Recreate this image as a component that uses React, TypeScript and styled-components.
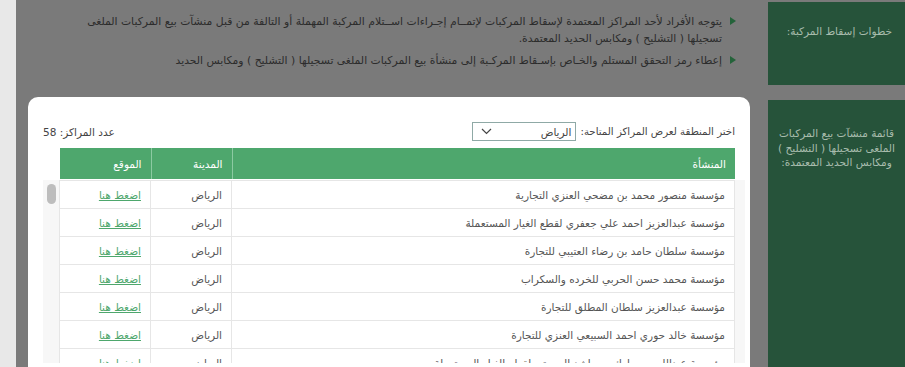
import styled, { createGlobalStyle } from "styled-components";

const GlobalStyle = createGlobalStyle`
  html, body {
    margin: 0;
    padding: 0;
    overflow: hidden;
    background: #7a7a7a;
  }
  * {
    box-sizing: border-box;
  }
`;

const names = [
  "مؤسسة منصور محمد بن مضحي العنزي التجارية",
  "مؤسسة عبدالعزيز احمد علي جعفري لقطع الغيار المستعملة",
  "مؤسسة سلطان حامد بن رضاء العتيبي للتجارة",
  "مؤسسة محمد حسن الحربي للخرده والسكراب",
  "مؤسسة عبدالعزيز سلطان المطلق للتجارة",
  "مؤسسة خالد حوري احمد السبيعي العنزي للتجارة",
  "مؤسسة عبدالله بن مبارك بن راشد الصويتي لقطع الغيار المستعملة",
];

// 58 rows like the real list, only the first few are visible
const centers = Array.from({ length: 58 }, (_, i) => names[i % names.length]);

const ROW_H = 28;
const VIEW_H = 183;
const thumbH = Math.max(20, Math.round((VIEW_H * VIEW_H) / (centers.length * ROW_H)) - 2);

export default function App() {
  return (
    <>
      <GlobalStyle />
      <Page>
        <LeftStrip />
        <Main>
          <Steps>
            <Step>
              <Bullet />
              <StepText>
                يتوجه الأفراد لأحد المراكز المعتمدة لإسقاط المركبات لإتمــام إجـراءات اســتلام المركبة المهملة أو التالفة من قبل منشآت بيع المركبات الملغى
                <br />
                تسجيلها ( التشليح ) ومكابس الحديد المعتمدة.
              </StepText>
            </Step>
            <Step>
              <Bullet />
              <StepText>
                إعطاء رمز التحقق المستلم والخـاص بإسـقاط المركـبة إلى منشأة بيع المركبات الملغى تسجيلها ( التشليح ) ومكابس الحديد
              </StepText>
            </Step>
          </Steps>
          <Card>
            <FilterRow>
              <FilterLabel>
                اختر المنطقة لعرض المراكز المتاحة:
                <Select>
                  <span>الرياض</span>
                  <svg width="11" height="7" viewBox="0 0 11 7">
                    <path d="M1 1l4.5 4.5L10 1" fill="none" stroke="#444" strokeWidth="1.2" />
                  </svg>
                </Select>
              </FilterLabel>
              <Count>عدد المراكز: 58</Count>
            </FilterRow>
            <HeadTable>
              <colgroup>
                <col width={503} />
                <col width={81} />
                <col width={91} />
              </colgroup>
              <thead>
                <tr>
                  <Th>المنشأة</Th>
                  <Th>المدينة</Th>
                  <Th>الموقع</Th>
                </tr>
              </thead>
            </HeadTable>
            <ScrollBox>
              <ScrollArea>
                <BodyTable>
                  <colgroup>
                    <col width={503} />
                    <col width={81} />
                    <col width={91} />
                  </colgroup>
                  <tbody>
                    {centers.map((name, i) => (
                      <tr key={i}>
                        <Td>{name}</Td>
                        <Td>الرياض</Td>
                        <Td>
                          <MapLink href="#">اضغط هنا</MapLink>
                        </Td>
                      </tr>
                    ))}
                  </tbody>
                </BodyTable>
              </ScrollArea>
              <Thumb style={{ height: thumbH }} />
            </ScrollBox>
          </Card>
        </Main>
        <Side>
          <SidePanel $height={83} $align="right">
            خطوات إسقاط المركبة:
          </SidePanel>
          <SidePanel $height={300} $align="center">
            قائمة منشآت بيع المركبات الملغى تسجيلها ( التشليح ) ومكابس الحديد المعتمدة:
          </SidePanel>
        </Side>
      </Page>
    </>
  );
}

const Page = styled.div`
  display: grid;
  grid-template-columns: 16px 12px 722px 18px 137px;
  width: 905px;
  height: 367px;
  overflow: hidden;
  background: #7a7a7a;
  font-family: "DejaVu Sans", "Noto Sans", sans-serif;
  & > :nth-child(2) {
    grid-column: 3;
  }
  & > :nth-child(3) {
    grid-column: 5;
  }
`;

const LeftStrip = styled.div`
  background: #e8e8e8;
  height: 100%;
`;

const Main = styled.div`
  display: flex;
  flex-direction: column;
  min-width: 0;
`;

const Steps = styled.ul`
  direction: rtl;
  list-style: none;
  margin: 0;
  padding: 13px 14px 0 0;
  height: 97px;
  display: flex;
  flex-direction: column;
  gap: 5px;
`;

const Step = styled.li`
  display: flex;
  align-items: flex-start;
  gap: 8px;
`;

const Bullet = styled.span`
  flex: none;
  width: 0;
  height: 0;
  margin-top: 4px;
  border-top: 4px solid transparent;
  border-bottom: 4px solid transparent;
  border-left: 6px solid #24633a;
`;

const StepText = styled.p`
  margin: 0;
  font-size: 10.8px;
  line-height: 17px;
  color: #2c2c2c;
  white-space: nowrap;
`;

const Card = styled.div`
  flex: 1;
  background: #fff;
  border-radius: 10px 10px 0 0;
  padding: 25px 15px 0 15px;
  direction: rtl;
`;

const FilterRow = styled.div`
  display: flex;
  justify-content: space-between;
  align-items: center;
  height: 19px;
  margin-bottom: 7px;
`;

const FilterLabel = styled.label`
  display: flex;
  align-items: center;
  gap: 4px;
  font-size: 10.2px;
  color: #444;
`;

const Select = styled.div`
  display: flex;
  justify-content: space-between;
  align-items: center;
  width: 104px;
  height: 19px;
  padding: 0 4px 0 8px;
  border: 1px solid #8fa9a6;
  font-size: 10.5px;
  color: #444;
`;

const Count = styled.span`
  font-size: 10.5px;
  color: #444;
`;

const HeadTable = styled.table`
  width: 675px;
  border-collapse: collapse;
  table-layout: fixed;
`;

const Th = styled.th`
  height: 31px;
  padding: 0 9px;
  background: #4ea76d;
  color: #fff;
  font-size: 10.5px;
  font-weight: 500;
  text-align: right;
  border-left: 1px solid #8ccaa2;
  &:last-child {
    border-left: none;
  }
`;

const ScrollBox = styled.div`
  position: relative;
  width: 702px;
  height: ${VIEW_H}px;
  margin-right: -10px;
  margin-top: 1px;
  background: #f7f7f7;
`;

const ScrollArea = styled.div`
  height: 100%;
  padding: 0 10px 0 17px;
  overflow: hidden;
`;

const Thumb = styled.div`
  position: absolute;
  left: 4px;
  top: 4px;
  width: 9px;
  border-radius: 5px;
  background: #bdbdbd;
`;

const BodyTable = styled.table`
  width: 675px;
  border-collapse: collapse;
  table-layout: fixed;
  background: #fff;
`;

const Td = styled.td`
  height: ${ROW_H}px;
  padding: 0 9px;
  border: 1px solid #e6e6e6;
  font-size: 10.5px;
  color: #555;
  text-align: right;
  white-space: nowrap;
  overflow: hidden;
`;

const MapLink = styled.a`
  color: #4ea76d;
  text-decoration: underline;
`;

const Side = styled.div`
  display: flex;
  flex-direction: column;
  gap: 15px;
  padding-top: 2px;
  direction: rtl;
`;

const SidePanel = styled.div<{ $height: number; $align: string }>`
  flex: none;
  height: ${(p) => p.$height}px;
  background: #26533a;
  color: #a8bcad;
  font-size: 10.5px;
  line-height: 14.5px;
  text-align: ${(p) => p.$align};
  padding: ${(p) => (p.$align === "center" ? "26px 4px 0" : "22px 13px 0")};
`;
